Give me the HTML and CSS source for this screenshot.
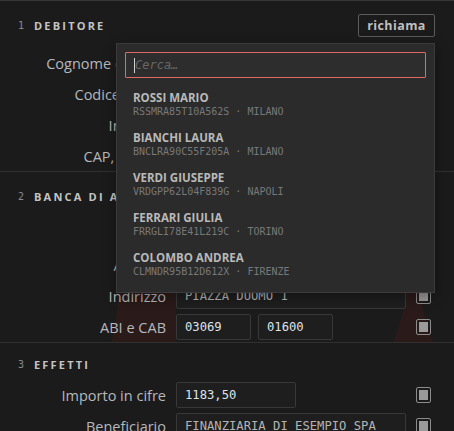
FILE: index.html
```html
<!DOCTYPE html>
<html lang="it">
<head>
    <meta charset="UTF-8">
    <meta name="viewport" content="width=device-width, initial-scale=1.0">
    <title>Ricevuta bancaria</title>
    <link rel="stylesheet" href="styles.css">
</head>
<body>
    <div class="page">
        <!-- Sezione 1: debitore -->
        <section class="sec">
            <div class="sec-head">
                <span class="num">1</span>
                <h2>DEBITORE</h2>
                <button class="recall">richiama</button>
            </div>
            <div class="row"><label>Cognome e nome</label><div class="fields"><input class="fld full" type="text"></div><span class="check"></span></div>
            <div class="row"><label>Codice fiscale</label><div class="fields"><input class="fld full" type="text"></div><span class="check"></span></div>
            <div class="row"><label>Indirizzo</label><div class="fields"><input class="fld full" type="text"></div><span class="check"></span></div>
            <div class="row"><label>CAP, località</label><div class="fields"><input class="fld full" type="text"></div><span class="check"></span></div>

            <!-- Menu richiama -->
            <div class="picker">
                <div class="search"><span class="caret"></span><span class="ph">Cerca…</span></div>
                <ul class="results">
                    <li><strong>ROSSI MARIO</strong><span>RSSMRA85T10A562S · MILANO</span></li>
                    <li><strong>BIANCHI LAURA</strong><span>BNCLRA90C55F205A · MILANO</span></li>
                    <li><strong>VERDI GIUSEPPE</strong><span>VRDGPP62L04F839G · NAPOLI</span></li>
                    <li><strong>FERRARI GIULIA</strong><span>FRRGLI78E41L219C · TORINO</span></li>
                    <li><strong>COLOMBO ANDREA</strong><span>CLMNDR95B12D612X · FIRENZE</span></li>
                </ul>
            </div>
        </section>

        <!-- Sezione 2: banca di appoggio -->
        <section class="sec sec-bank">
            <svg class="mark" width="454" height="172" viewBox="0 171 454 172">
                <path d="M119,286 C118,305 115,325 111,343 L176,343 L176,286 Z"/>
                <path d="M407,286 C404,310 398,330 392,343 L434,343 C428,330 423,310 419,286 Z"/>
            </svg>
            <div class="sec-head">
                <span class="num">2</span>
                <h2>BANCA DI APPOGGIO</h2>
                <button class="recall">richiama</button>
            </div>
            <div class="row"><label>Banca</label><div class="fields"><input class="fld full" type="text"></div><span class="check"></span></div>
            <div class="row"><label>Agenzia</label><div class="fields"><input class="fld full" type="text"></div><span class="check"></span></div>
            <div class="row"><label>Indirizzo</label><div class="fields"><input class="fld full dim" type="text" value="PIAZZA DUOMO 1"></div><span class="check"></span></div>
            <div class="row"><label>ABI e CAB</label><div class="fields"><input class="fld code" type="text" value="03069"><input class="fld code" type="text" value="01600"></div><span class="check"></span></div>
        </section>

        <!-- Sezione 3: effetti -->
        <section class="sec">
            <div class="sec-head plain">
                <span class="num">3</span>
                <h2>EFFETTI</h2>
            </div>
            <div class="row"><label>Importo in cifre</label><div class="fields"><input class="fld amount" type="text" value="1183,50"></div><span class="check"></span></div>
            <div class="row"><label>Beneficiario</label><div class="fields"><input class="fld full dim" type="text" value="FINANZIARIA DI ESEMPIO SPA"></div><span class="check"></span></div>
        </section>
    </div>
</body>
</html>
```

FILE: styles.css
```css
body {
    margin: 0;
    padding: 0;
    background-color: #1b1b1b;
    font-family: 'Open Sans', 'Liberation Sans', sans-serif;
    color: #b8b8b8;
    overflow: hidden;
}
.page {
    border-top: 1px solid #363636;
}
.sec {
    position: relative;
    padding: 13px 19px 2px 18px;
    border-bottom: 1px solid #303030;
}
.sec-bank {
    overflow: hidden;
}
.mark {
    position: absolute;
    left: 0;
    top: 0;
    fill: #2a1a1a;
}
.sec-head {
    position: relative;
    display: flex;
    align-items: center;
    height: 23px;
    margin-bottom: 13px;
}
.sec-head.plain {
    height: 16px;
    margin-bottom: 10px;
}
.num {
    width: 16px;
    font-family: 'DejaVu Sans Mono', monospace;
    font-size: 10px;
    color: #8a8a8a;
}
h2 {
    margin: 0;
    flex: 1;
    font-size: 11px;
    font-weight: 700;
    letter-spacing: 2.2px;
    color: #c4c4c4;
}
.recall {
    height: 23px;
    width: 77px;
    padding: 0;
    background: transparent;
    border: 1px solid #5a5a5a;
    border-radius: 2px;
    font-family: 'Open Sans', 'Liberation Sans', sans-serif;
    font-size: 12.5px;
    font-weight: 700;
    letter-spacing: 0.4px;
    color: #bfbfbf;
}
.row {
    position: relative;
    display: grid;
    grid-template-columns: 148px 1fr 19px;
    column-gap: 10px;
    align-items: center;
    height: 26px;
}
.row + .row {
    margin-top: 5px;
}
.row label {
    text-align: right;
    font-size: 14.5px;
    color: #b6b8bc;
    white-space: nowrap;
}
.fields {
    display: flex;
    gap: 7px;
    height: 26px;
}
.fld {
    box-sizing: border-box;
    height: 26px;
    padding: 0 8px;
    background-color: #1e1e1e;
    border: 1px solid #383838;
    border-radius: 2px;
    font-family: 'DejaVu Sans Mono', monospace;
    font-size: 12.2px;
    color: #dfe3e8;
    outline: none;
}
.fld.full {
    width: 230px;
}
.fld.dim {
    color: #b4b4b4;
}
.fld.code {
    width: 75px;
}
.fld.amount {
    width: 120px;
}
.check {
    box-sizing: border-box;
    width: 15px;
    height: 16px;
    border: 1.5px solid #8c8c8c;
    border-radius: 2px;
    padding: 2px;
    background-clip: content-box;
    background-color: #9a9a9a;
}

/* dropdown */
.picker {
    position: absolute;
    top: 42px;
    right: 19px;
    width: 319px;
    box-sizing: border-box;
    padding: 8px;
    background-color: #2b2b2b;
    border: 1px solid #3b3b3b;
    box-shadow: 0 4px 12px rgba(0, 0, 0, 0.35);
    z-index: 5;
}
.search {
    display: flex;
    align-items: center;
    height: 26px;
    box-sizing: border-box;
    padding-left: 8px;
    background-color: #2d2d2d;
    border: 1px solid #df6a66;
    border-radius: 1px;
}
.caret {
    width: 1px;
    height: 15px;
    background-color: #cfcfcf;
}
.ph {
    font-family: 'DejaVu Sans Mono', monospace;
    font-size: 12px;
    font-style: italic;
    color: #686868;
}
.results {
    list-style: none;
    margin: 6px 0 0;
    padding: 0;
}
.results li {
    display: flex;
    flex-direction: column;
    padding: 6px 8px;
}
.results strong {
    font-size: 11.5px;
    line-height: 15px;
    font-weight: 700;
    color: #b9b9b9;
}
.results span {
    font-family: 'DejaVu Sans Mono', monospace;
    font-size: 10px;
    line-height: 13px;
    color: #787878;
}
```
